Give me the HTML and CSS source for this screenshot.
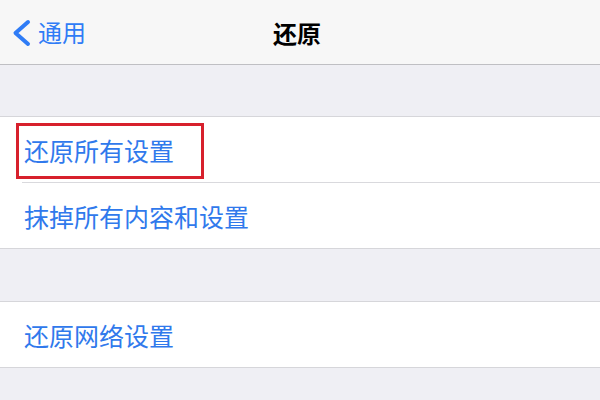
FILE: index.html
```html
<!DOCTYPE html>
<html lang="zh-CN">
<head>
<meta charset="utf-8">
<title>还原</title>
<link rel="stylesheet" href="styles.css">
</head>
<body>
<div class="screen">
  <header class="nav">
    <div class="nav-left">
      <svg class="chev" width="20" height="28" viewBox="0 0 20 28" aria-hidden="true">
        <polyline points="16,3 3.5,14 16,25" fill="none" stroke="#2f7cf6" stroke-width="4" stroke-linecap="round" stroke-linejoin="round"/>
      </svg>
      <span class="back-label">通用</span>
    </div>
    <div class="nav-title">还原</div>
    <div class="nav-right"></div>
  </header>
  <div class="gap gap-top"></div>
  <section class="group">
    <div class="row row-sep highlighted">
      <span class="label">还原所有设置</span>
      <span class="mark"></span>
    </div>
    <div class="row">
      <span class="label">抹掉所有内容和设置</span>
    </div>
  </section>
  <div class="gap gap-mid"></div>
  <section class="group">
    <div class="row">
      <span class="label">还原网络设置</span>
    </div>
  </section>
</div>
</body>
</html>
```

FILE: styles.css
```css
* { box-sizing: border-box; }
html, body {
  margin: 0;
  padding: 0;
  background: #efeff4;
}
body {
  font-family: "Noto Sans CJK SC", "Noto Sans", "Liberation Sans", sans-serif;
  width: 600px;
  height: 400px;
  overflow: hidden;
}
.screen {
  display: flex;
  flex-direction: column;
  width: 600px;
}
.nav {
  height: 65px;
  background: #f7f7f7;
  border-bottom: 1px solid #bfbfc3;
  display: grid;
  grid-template-columns: 1fr auto 1fr;
  align-items: center;
}
.nav-left {
  display: flex;
  align-items: center;
  padding-left: 12px;
  color: #2f7cf6;
  font-size: 24px;
  line-height: 28px;
}
.chev {
  display: block;
  margin-top: 2px;
}
.back-label {
  margin-left: 6px;
}
.nav-title {
  font-size: 24px;
  font-weight: 600;
  color: #000;
  line-height: 28px;
  margin-right: 6px;
  margin-top: 1px;
}
.gap-top { height: 51px; }
.gap-mid { height: 52px; }
.group {
  background: #fff;
  border-top: 1px solid #d6d6da;
  border-bottom: 1px solid #d6d6da;
}
.row {
  position: relative;
  height: 65px;
  display: flex;
  align-items: center;
  padding-left: 24px;
  padding-top: 0;
}
.row-sep::after {
  content: "";
  position: absolute;
  left: 22px;
  right: 0;
  bottom: -1px;
  height: 1px;
  background: #d9d9dd;
}
.row-sep { margin-bottom: 1px; }
.label {
  font-size: 25px;
  color: #3079ec;
  line-height: 30px;
}
.mark {
  position: absolute;
  left: 16px;
  top: 6px;
  width: 188px;
  height: 56px;
  border: 3px solid #d7202c;
}
```
